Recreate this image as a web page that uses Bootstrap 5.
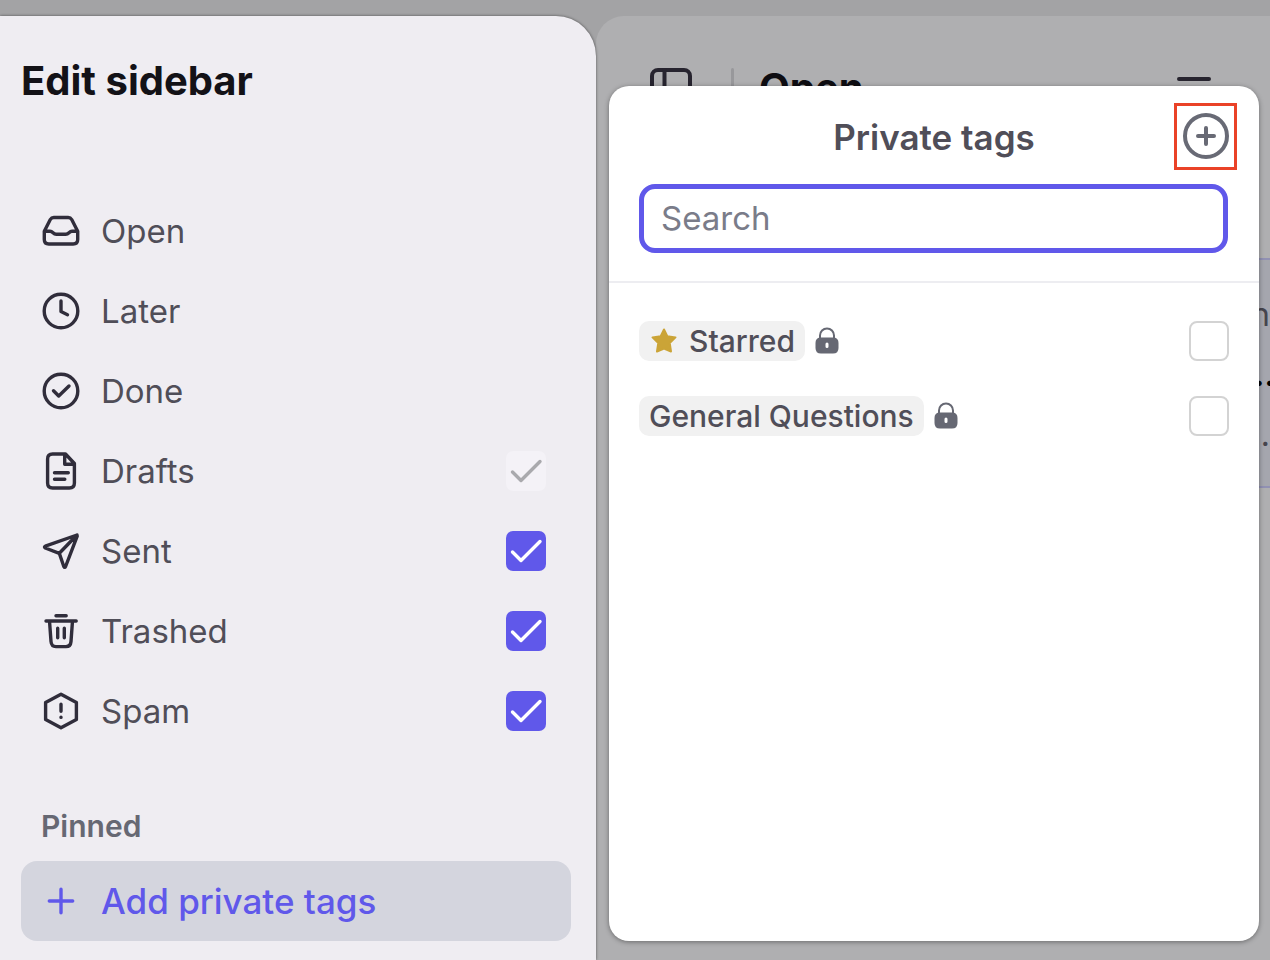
<!DOCTYPE html>
<html lang="en">
<head>
<meta charset="utf-8">
<meta name="viewport" content="width=device-width, initial-scale=1">
<title>Edit sidebar</title>
<link href="https://cdn.jsdelivr.net/npm/bootstrap@5.3.0/dist/css/bootstrap.min.css" rel="stylesheet">
<style>
  body { font-family: Inter, "Liberation Sans", sans-serif; background: #a3a3a5; color: #504e58; }
  svg { display: block; fill: none; stroke: currentColor; stroke-width: 3.4; stroke-linecap: round; stroke-linejoin: round; flex: none; }
  .app-shell { min-height: 100vh; padding-top: 16px; display: grid; grid-template-columns: 298fr 337fr; overflow: hidden; }

  /* Sidebar editor */
  .side-panel { background: #efedf2; border-top-right-radius: 40px; padding: 41px 25px 19px 21px; box-shadow: 0 0 3px rgba(0,0,0,.55); z-index: 1; }
  .side-title { font-size: 40px; line-height: 48px; font-weight: 700; color: #131217; margin-bottom: 86px; }
  .side-row { height: 80px; padding: 0 25px 0 20px; gap: 20px; font-size: 33px; line-height: 40px; }
  .side-row svg { color: #302d3b; }
  .tick.form-check-input { width: 40px; height: 40px; margin: 0; border: 2px solid #d3d3d3; border-radius: 8px; background-color: #fff; flex: none; }
  .tick.form-check-input:checked { border: 0; border-radius: 7px; background-color: #6058ea; background-size: 100%;
    background-image: url("data:image/svg+xml,%3Csvg xmlns='http://www.w3.org/2000/svg' viewBox='0 0 40 40'%3E%3Cpath fill='none' stroke='%23fff' stroke-width='3.4' stroke-linecap='round' stroke-linejoin='round' d='M6.5 21l8.5 8.5 19-19'/%3E%3C/svg%3E"); }
  .tick.form-check-input:disabled { opacity: 1; background-color: #f4f2f7;
    background-image: url("data:image/svg+xml,%3Csvg xmlns='http://www.w3.org/2000/svg' viewBox='0 0 40 40'%3E%3Cpath fill='none' stroke='%23a9a9ad' stroke-width='3.4' stroke-linecap='round' stroke-linejoin='round' d='M6.5 21l8.5 8.5 19-19'/%3E%3C/svg%3E"); }
  .pin-title { font-size: 30px; line-height: 40px; font-weight: 600; color: #666873; margin: 55px 20px 15px; }
  .add-btn, .add-btn:hover { height: 80px; padding: 0 20px; gap: 20px; border: 0; border-radius: 16px; background: #d4d5de; color: #6058ea; font-size: 35px; line-height: 40px; font-weight: 500; }

  /* Dimmed conversation list */
  .main-pane { background: #afafb1; border-top-left-radius: 28px; min-width: 0; }
  .main-head { height: 80px; margin-top: 32px; padding: 0 56px 0 54px; color: #27242f; }
  .head-rule { width: 3px; height: 40px; background: #98989b; margin: 0 25px 0 39px; border-radius: 2px; }
  .main-title { font-size: 40px; line-height: 48px; font-weight: 700; color: #0e0d12; }
  .convo { margin: 130px 0 0 24px; height: 230px; padding-top: 35px; border: solid #9191b3; border-width: 2px 0; background: #a5a6ae; text-align: right; font-size: 32px; line-height: 40px; color: #46454e; }
  .convo-text { height: 60px; }
  .convo-lead { margin-right: -5px; }

  /* Tag picker */
  .tag-pop { inset: 70px 11px 19px 13px; background: #fff; border-radius: 20px; box-shadow: 0 1px 5px rgba(0,0,0,.4); }
  .pop-head { display: grid; grid-template-columns: 1fr auto 1fr; padding: 17px 22px 14px; align-items: center; }
  .pop-title { grid-column: 2; font-size: 35px; line-height: 44px; font-weight: 600; }
  .new-btn { justify-self: end; width: 63px; height: 67px; padding: 0 0 1px; border: 3px solid #ea4228; background: none; color: #686a75; display: grid; place-items: center; }
  .find-box { margin: 0 31px 28px 30px; }
  .find-box .form-control { height: 69px; padding: 0 17px 2px; border: 5px solid #6058ea; border-radius: 16px; font-size: 33px; line-height: 40px; box-shadow: none; }
  .find-box .form-control::placeholder { color: #7a7c89; }
  .tag-list { border-top: 2px solid #ededf1; padding: 38px 30px; gap: 35px; }
  .tag-row { gap: 10px; }
  .tag-row svg { color: #666873; stroke-width: 2; }
  .tag-chip { height: 40px; padding: 0 10px; gap: 10px; border-radius: 10px; background: #f1f1f1; font-size: 30px; line-height: 40px; font-weight: 500; }
  .tag-chip svg { fill: #cba437; stroke: #cba437; }
  .bold-line { stroke-width: 4; }
</style>
</head>
<body>
<div class="app-shell">
  <aside class="side-panel position-relative">
    <h1 class="side-title">Edit sidebar</h1>
    <div>
      <div class="side-row d-flex align-items-center">
        <svg width="40" height="40" viewBox="0 0 40 40"><path d="M3.3 20.3 9.3 8.5Q10.5 6.5 12.8 6.5H27.2Q29.5 6.5 30.7 8.5L36.7 20.3V28.5Q36.7 33 32.2 33H7.8Q3.3 33 3.3 28.5ZM3.3 20.3H9Q10.5 20.3 12 21.8 13.5 23.3 15.3 23.3H24.7Q26.5 23.3 28 21.8 29.5 20.3 31 20.3H36.7"/></svg>
        <span>Open</span>
      </div>
      <div class="side-row d-flex align-items-center">
        <svg width="40" height="40" viewBox="0 0 40 40"><circle cx="20" cy="20" r="16.8"/><path d="M20 10V20.5L26.5 23.7"/></svg>
        <span>Later</span>
      </div>
      <div class="side-row d-flex align-items-center">
        <svg width="40" height="40" viewBox="0 0 40 40"><circle cx="20" cy="20" r="16.8"/><path d="M12.5 19.8 17.7 25 28 15"/></svg>
        <span>Done</span>
      </div>
      <div class="side-row d-flex align-items-center">
        <svg width="40" height="40" viewBox="0 0 40 40"><path d="M24.5 3H11.6Q6.6 3 6.6 8V32Q6.6 37 11.6 37H28.4Q33.4 37 33.4 32V12.5ZM23.7 3V13.3H33.4M13.5 21.7H27.3M13.5 28.3H23.8"/></svg>
        <label class="flex-grow-1" for="drafts">Drafts</label>
        <input class="form-check-input tick" type="checkbox" id="drafts" checked disabled>
      </div>
      <div class="side-row d-flex align-items-center">
        <svg width="40" height="40" viewBox="0 0 40 40"><path d="M36 4 4.3 15.2Q2.7 16 4.3 17L18.3 22.3 22.8 35.5Q23.7 37.3 24.6 35.5L36.2 5.2ZM35.5 4.5 18.3 22.3"/></svg>
        <label class="flex-grow-1" for="sent">Sent</label>
        <input class="form-check-input tick" type="checkbox" id="sent" checked>
      </div>
      <div class="side-row d-flex align-items-center">
        <svg width="40" height="40" viewBox="0 0 40 40"><path d="M15 4.8H25.2M5 10H35.2M8.5 10 10 30.5Q10.4 35.6 15 35.6H25Q29.6 35.6 30 30.5L31.5 10M16.7 17.3V26.7M23.3 17.3V26.7"/></svg>
        <label class="flex-grow-1" for="trashed">Trashed</label>
        <input class="form-check-input tick" type="checkbox" id="trashed" checked>
      </div>
      <div class="side-row d-flex align-items-center">
        <svg width="40" height="40" viewBox="0 0 40 40"><path d="M20 3.3 35.4 11.6V28.4L20 36.7 4.6 28.4V11.6ZM20 13.3V20.2M20 26.3V26.4"/></svg>
        <label class="flex-grow-1" for="spam">Spam</label>
        <input class="form-check-input tick" type="checkbox" id="spam" checked>
      </div>
    </div>
    <h2 class="pin-title">Pinned</h2>
    <button type="button" class="btn add-btn w-100 d-flex align-items-center text-start">
      <svg width="40" height="40" viewBox="0 0 40 40"><path d="M20 8.3V31.7M8.3 20H31.7"/></svg>
      Add private tags
    </button>
  </aside>

  <main class="main-pane position-relative">
    <div class="main-head d-flex align-items-center">
      <svg class="bold-line" width="42" height="40" viewBox="0 0 42 40"><rect x="2" y="2" width="38" height="36" rx="6"/><path d="M14.500 2V38"/></svg>
      <div class="head-rule"></div>
      <h2 class="main-title mb-0 flex-grow-1">Open</h2>
      <svg class="bold-line" width="40" height="40" viewBox="0 0 40 40"><path d="M5 11H35M10 21H30M15 31H25"/></svg>
    </div>
    <div class="convo">
      <div class="convo-text">n</div>
      <div class="convo-text convo-lead fw-bold text-black">…</div>
      <div>…</div>
    </div>

    <section class="tag-pop position-absolute" aria-label="Private tags">
      <div class="pop-head">
        <h2 class="pop-title mb-0">Private tags</h2>
        <button type="button" class="new-btn" aria-label="New tag">
          <svg class="bold-line" width="48" height="48" viewBox="0 0 48 48"><circle cx="24" cy="24" r="21"/><path d="M24 16V32M16 24H32"/></svg>
        </button>
      </div>
      <div class="find-box"><input type="search" class="form-control" placeholder="Search" aria-label="Search"></div>
      <div class="tag-list d-flex flex-column">
        <div class="tag-row d-flex align-items-center">
          <label class="tag-chip d-flex align-items-center" for="starred">
            <svg width="30" height="30" viewBox="0 0 30 30"><path d="M15 3.500 18.300 10.300 26.500 11.400 20.700 17 22 25.500 15 22.500 8 25.500 9.300 17 3.500 11.400 11.700 10.300Z"/></svg>
            Starred
          </label>
          <svg width="24" height="28" viewBox="0 0 24 28"><path d="M5 12V8.500a7 7 0 0 1 14 0V12"/><path fill="currentColor" stroke="none" fill-rule="evenodd" d="M5 10.500H19Q23.500 11 23.500 16V21Q23.500 26.500 18 26.500H6Q.5 26.500 .5 21V16Q.5 11 5 10.500ZM12 15.500a1.500 1.500 0 0 0-1.500 1.500v2.500a1.500 1.500 0 0 0 3 0v-2.500A1.500 1.500 0 0 0 12 15.500Z"/></svg>
          <input class="form-check-input tick ms-auto" type="checkbox" id="starred">
        </div>
        <div class="tag-row d-flex align-items-center">
          <label class="tag-chip" for="general">General Questions</label>
          <svg width="24" height="28" viewBox="0 0 24 28"><path d="M5 12V8.500a7 7 0 0 1 14 0V12"/><path fill="currentColor" stroke="none" fill-rule="evenodd" d="M5 10.500H19Q23.500 11 23.500 16V21Q23.500 26.500 18 26.500H6Q.5 26.500 .5 21V16Q.5 11 5 10.500ZM12 15.500a1.500 1.500 0 0 0-1.500 1.500v2.500a1.500 1.500 0 0 0 3 0v-2.500A1.500 1.500 0 0 0 12 15.500Z"/></svg>
          <input class="form-check-input tick ms-auto" type="checkbox" id="general">
        </div>
      </div>
    </section>
  </main>
</div>
<script src="https://cdn.jsdelivr.net/npm/bootstrap@5.3.0/dist/js/bootstrap.bundle.min.js"></script>
</body>
</html>
